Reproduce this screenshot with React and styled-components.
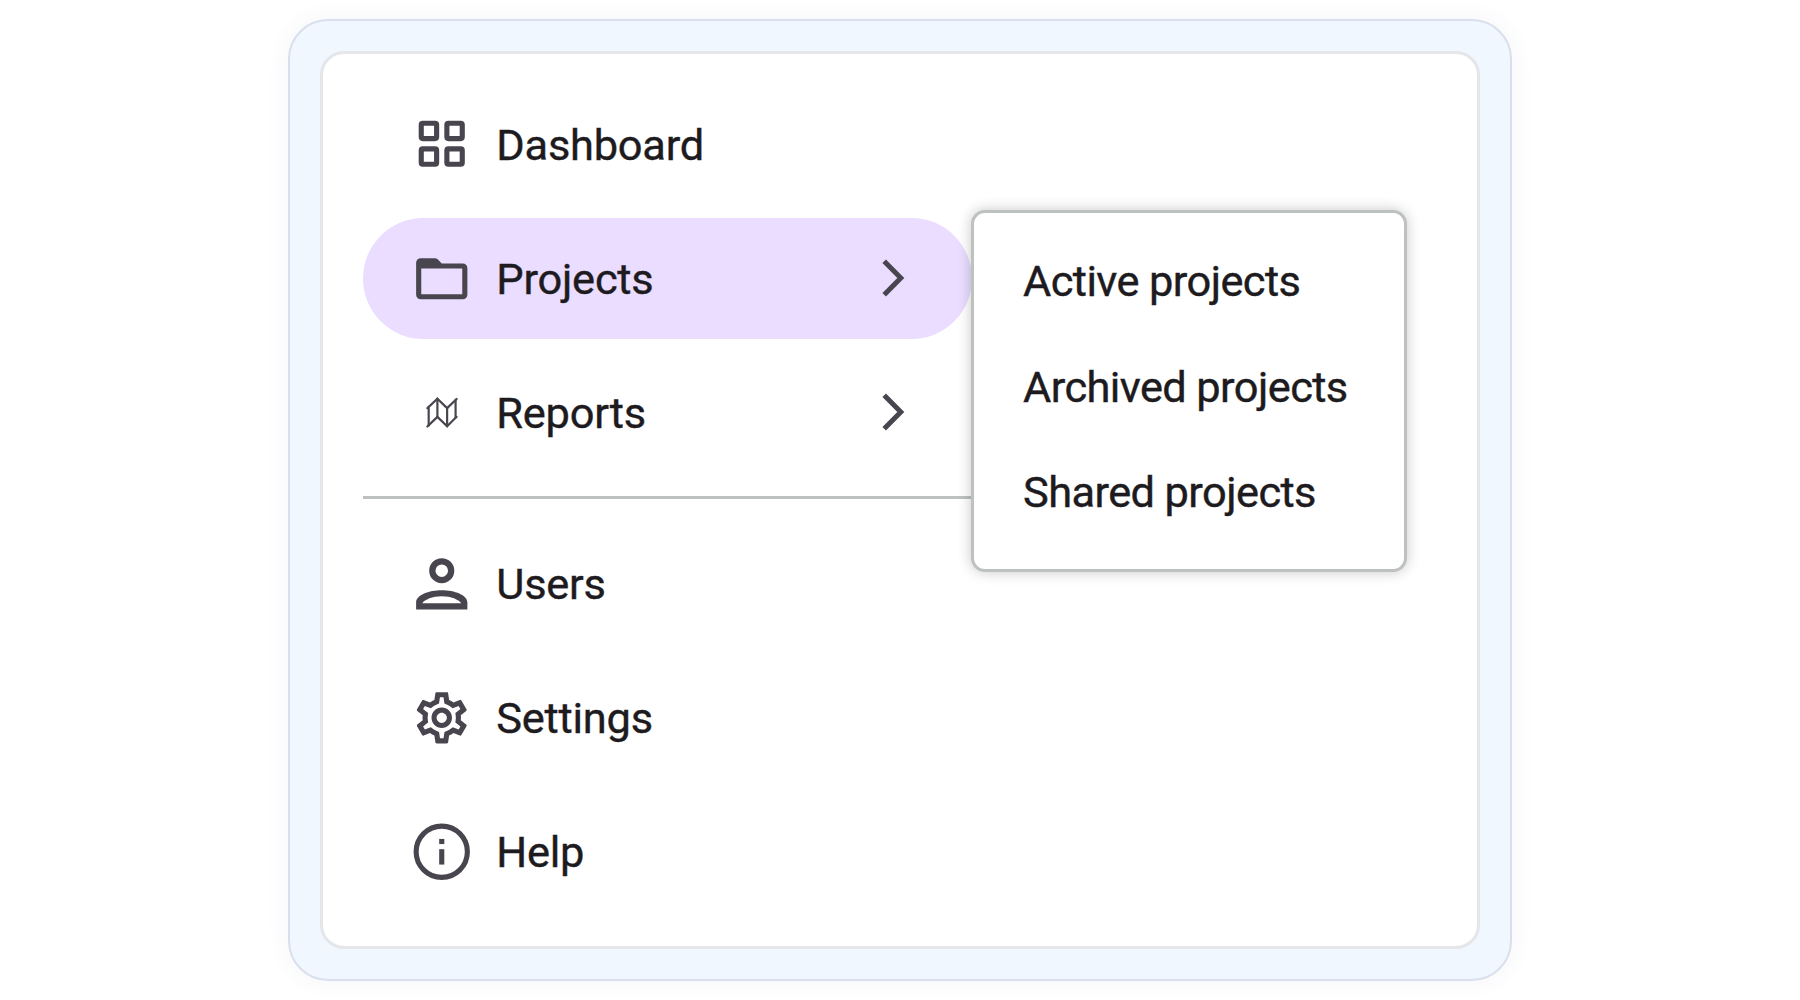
import styled, { createGlobalStyle } from 'styled-components'
import { MdOutlineSettings } from 'react-icons/md'

const colors = {
  frame: '#f0f7ff',
  frameBorder: '#d9dfec',
  panelBorder: '#e4e6e9',
  active: '#eaddff',
  text: '#1d1b20',
  icon: '#49454f',
  line: '#bdc1bf',
  white: '#ffffff',
}

const GlobalStyle = createGlobalStyle`
  * {
    box-sizing: border-box;
  }
  body {
    margin: 0;
    background-color: ${colors.white};
    font-family: Roboto, sans-serif;
  }
`

const Page = styled.div`
  display: flex;
  align-items: center;
  justify-content: center;
  width: 100%;
  height: 100vh;
`

const Frame = styled.div`
  display: flex;
  width: 1224px;
  height: 962px;
  padding: 30px;
  background-color: ${colors.frame};
  border: 2px solid ${colors.frameBorder};
  border-radius: 40px;
  box-shadow: 0 0 24px rgba(60, 90, 150, 0.06);
`

const Panel = styled.div`
  flex: 1;
  padding: 29.6px 39.5px;
  background-color: ${colors.white};
  border: 3px solid ${colors.panelBorder};
  border-radius: 24px;
`

const Menu = styled.nav`
  display: flex;
  flex-direction: column;
  width: 609.5px;
`

const Group = styled.div`
  display: flex;
  flex-direction: column;
  gap: 12.8px;
`

const Divider = styled.hr`
  width: 100%;
  height: 3px;
  margin: 23.3px 0 23.3px;
  border: 0;
  background-color: ${colors.line};
`

const ItemWrapper = styled.div`
  position: relative;
`

const MenuItem = styled.div`
  display: flex;
  align-items: center;
  height: 121.3px;
  padding: 0 63px 0 48.5px;
  border-radius: 61px;
  background-color: ${(props) => (props.$active ? colors.active : 'transparent')};
`

const IconBox = styled.span`
  display: flex;
  width: 61.5px;
  height: 61.5px;
  color: ${colors.icon};

  svg {
    width: 100%;
    height: 100%;
  }
`

const Label = styled.span`
  flex: 1;
  margin-left: 23.8px;
  padding-top: 3.4px;
  font-size: 43.4px;
  line-height: 60px;
  letter-spacing: -0.24px;
  color: ${colors.text};
  white-space: nowrap;
  -webkit-text-stroke: 0.4px ${colors.text};
`

const Chevron = styled.svg`
  width: 30px;
  height: 40px;
  color: ${colors.icon};
`

const SubMenu = styled.div`
  position: absolute;
  top: -8px;
  left: 608.5px;
  z-index: 1;
  display: flex;
  flex-direction: column;
  width: 435.5px;
  height: 362px;
  padding: 16.6px 49px;
  background-color: ${colors.white};
  border: 3px solid ${colors.line};
  border-radius: 14px;
  box-shadow: 0 0 14px rgba(0, 0, 0, 0.22);
`

const SubMenuItem = styled.span`
  height: 105.4px;
  font-size: 43.4px;
  line-height: 105.4px;
  letter-spacing: -0.6px;
  color: ${colors.text};
  white-space: nowrap;
  -webkit-text-stroke: 0.4px ${colors.text};
`

const DashboardIcon = () => (
  <svg viewBox="0 0 24 24" fill="none" stroke="currentColor" strokeWidth="2">
    <rect x="4" y="4" width="6" height="6" rx="0.6" />
    <rect x="14" y="4" width="6" height="6" rx="0.6" />
    <rect x="4" y="14" width="6" height="6" rx="0.6" />
    <rect x="14" y="14" width="6" height="6" rx="0.6" />
  </svg>
)

const FolderIcon = () => (
  <svg viewBox="0 0 24 24" fill="currentColor" fillRule="evenodd">
    <path d="M3.8 4H9.2Q10 4 10.5 4.5L12 6H20.2A1.8 1.8 0 0 1 22 7.8V18.2A1.8 1.8 0 0 1 20.2 20H3.8A1.8 1.8 0 0 1 2 18.2V5.8A1.8 1.8 0 0 1 3.8 4ZM4 8V18H20V8Z" />
  </svg>
)

const MapIcon = () => (
  <svg viewBox="0 0 24 24" fill="none" stroke="currentColor" strokeWidth="0.85" strokeLinecap="round">
    <path d="M6.4 10.2L10.3 6.5L14.1 10.2L17.8 6.6M6.4 17.4L10.3 13.6L14.1 17.3L17.8 13.6" />
    <path d="M6.9 10.2V17M10.3 6.5V13.6M14.1 10.2V17.3M17.4 7V13.9" />
  </svg>
)

const UserIcon = () => (
  <svg viewBox="0 0 24 24" fill="currentColor" fillRule="evenodd">
    <path d="M12 2A4.9 4.9 0 1 1 12 11.8A4.9 4.9 0 1 1 12 2ZM12 4.45A2.45 2.45 0 1 0 12 9.35A2.45 2.45 0 1 0 12 4.45Z" />
    <path d="M2 22V19.2C2 16.4 7 14.5 12 14.5S22 16.4 22 19.2V22ZM4.4 19.6H19.6C18.6 18.2 15.6 16.9 12 16.9S5.4 18.2 4.4 19.6Z" />
  </svg>
)

const InfoIcon = () => (
  <svg viewBox="0 0 24 24" fill="currentColor">
    <circle cx="12" cy="12" r="10" fill="none" stroke="currentColor" strokeWidth="2" />
    <rect x="11" y="7" width="2" height="2" />
    <rect x="11" y="11" width="2" height="6" />
  </svg>
)

const mainItems = [
  { label: 'Dashboard', icon: <DashboardIcon /> },
  {
    label: 'Projects',
    icon: <FolderIcon />,
    active: true,
    expandable: true,
    children: ['Active projects', 'Archived projects', 'Shared projects'],
  },
  { label: 'Reports', icon: <MapIcon />, expandable: true },
]

const otherItems = [
  { label: 'Users', icon: <UserIcon /> },
  { label: 'Settings', icon: <MdOutlineSettings /> },
  { label: 'Help', icon: <InfoIcon /> },
]

const Item = ({ item }) => (
  <ItemWrapper>
    <MenuItem $active={item.active}>
      <IconBox>{item.icon}</IconBox>
      <Label>{item.label}</Label>
      {item.expandable && (
        <Chevron viewBox="0 0 30 40" fill="none" stroke="currentColor" strokeWidth="5">
          <path d="M5.2 3.2L21.8 20L5.2 36.8" />
        </Chevron>
      )}
    </MenuItem>
    {item.children && (
      <SubMenu>
        {item.children.map((child) => (
          <SubMenuItem key={child}>{child}</SubMenuItem>
        ))}
      </SubMenu>
    )}
  </ItemWrapper>
)

const App = () => {
  return (
    <Page>
      <GlobalStyle />
      <Frame>
        <Panel>
          <Menu>
            <Group>
              {mainItems.map((item) => (
                <Item key={item.label} item={item} />
              ))}
            </Group>
            <Divider />
            <Group>
              {otherItems.map((item) => (
                <Item key={item.label} item={item} />
              ))}
            </Group>
          </Menu>
        </Panel>
      </Frame>
    </Page>
  )
}

export default App
